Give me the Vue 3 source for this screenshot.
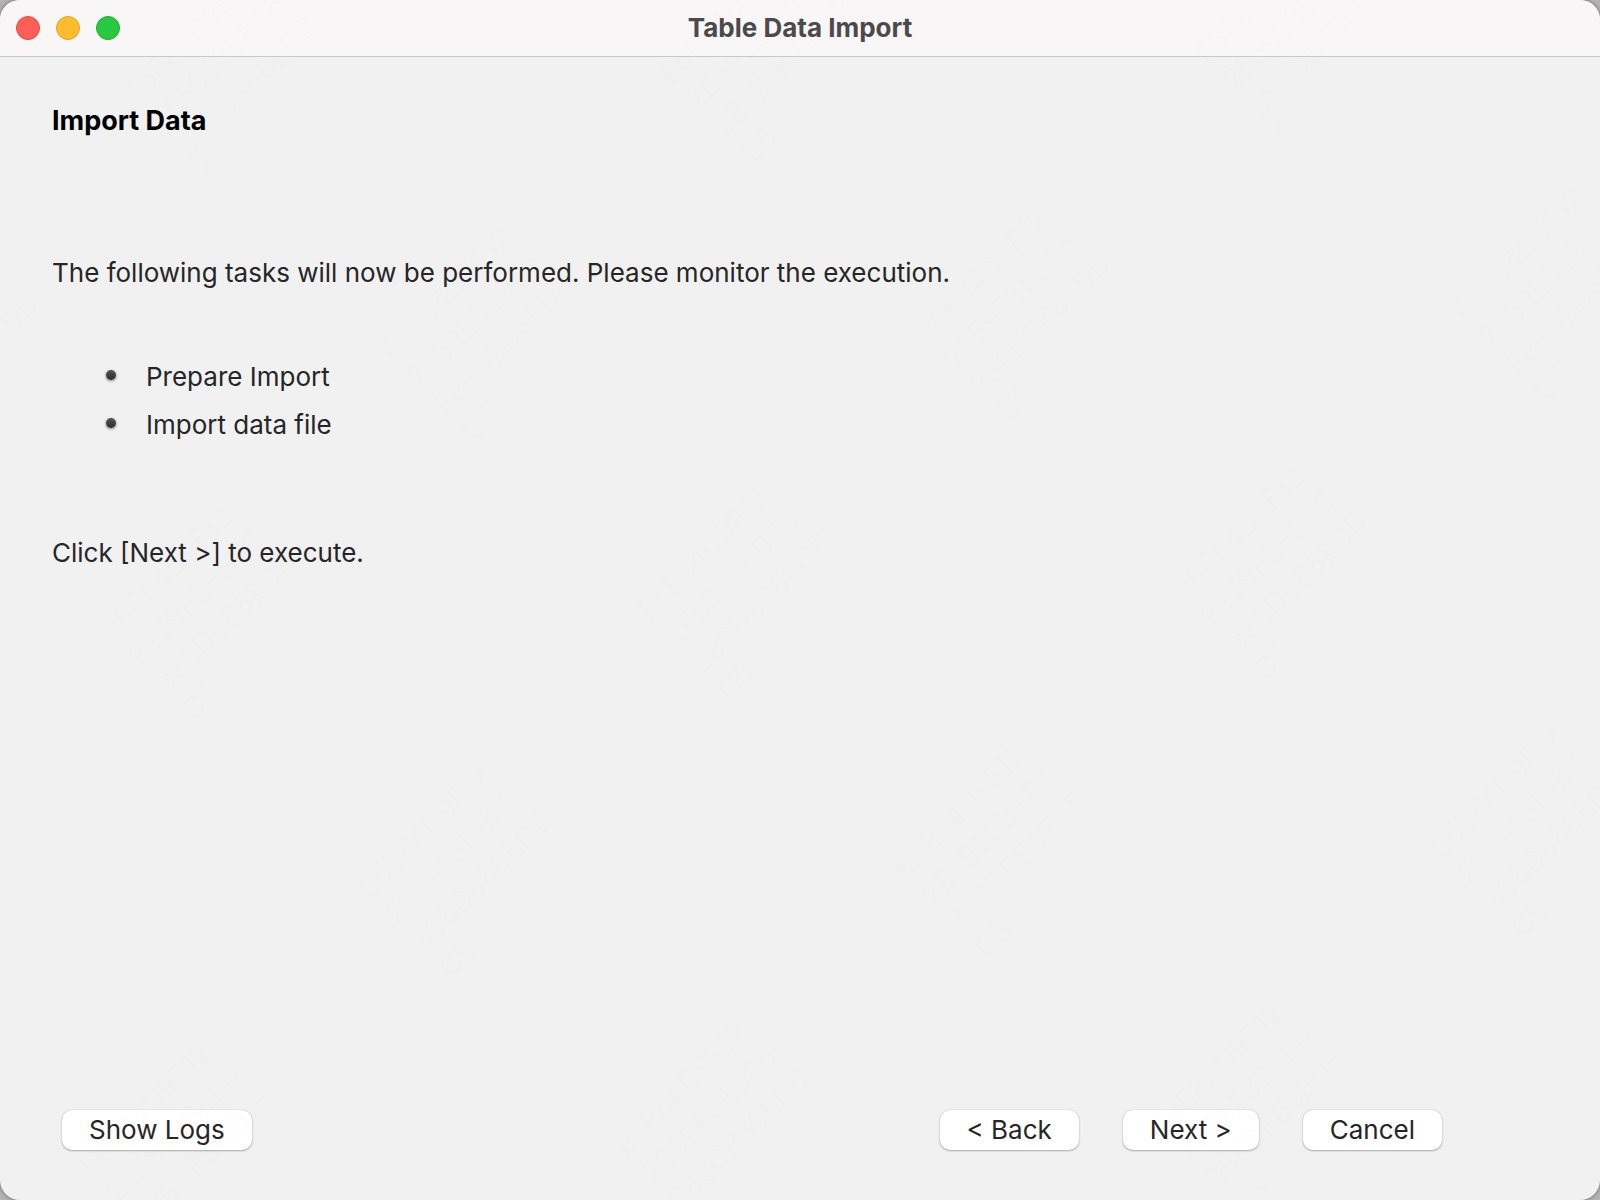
<script setup>
const tasks = ['Prepare Import', 'Import data file']
const stampLines = ['E6E84D9F12', '2E59E3BBF6', '386DB66EDB', 'C5']

// Two lattice vectors repeat the stamp diagonally over the window.
const stamps = []
for (let row = -3; row <= 3; row++) {
  for (let col = -3; col <= 3; col++) {
    const x = 649 + col * 536 + row * 257
    const y = 621 - col * 20 + row * 258
    if (x > -200 && x < 1600 && y > 0 && y < 1320) {
      stamps.push({ id: `${row}:${col}`, x, y })
    }
  }
}
</script>

<template>
  <div class="window">
    <header class="titlebar">
      <div class="lights">
        <button class="light close" type="button" aria-label="Close"></button>
        <button class="light minimize" type="button" aria-label="Minimize"></button>
        <button class="light zoom" type="button" aria-label="Zoom"></button>
      </div>
      <h1 class="title">Table Data Import</h1>
    </header>

    <main class="content">
      <h2 class="heading">Import Data</h2>
      <p class="intro">The following tasks will now be performed. Please monitor the execution.</p>
      <ul class="tasks">
        <li v-for="task in tasks" :key="task" class="task">
          <span class="dot"></span>
          <span>{{ task }}</span>
        </li>
      </ul>
      <p class="hint">Click [Next &gt;] to execute.</p>
    </main>

    <footer class="actions">
      <button class="push" type="button">Show Logs</button>
      <div class="steps">
        <button class="push" type="button">&lt; Back</button>
        <button class="push" type="button">Next &gt;</button>
        <button class="push" type="button">Cancel</button>
      </div>
    </footer>

    <svg class="watermark" aria-hidden="true">
      <g
        v-for="stamp in stamps"
        :key="stamp.id"
        :transform="`translate(${stamp.x} ${stamp.y}) rotate(-45)`"
      >
        <text v-for="(line, i) in stampLines" :key="line" x="0" :y="i * 38">{{ line }}</text>
      </g>
    </svg>
  </div>
</template>

<style>
body {
  margin: 0;
  background: #b4b4b4;
}
</style>

<style scoped>
.window {
  position: relative;
  display: flex;
  flex-direction: column;
  box-sizing: border-box;
  min-height: 100vh;
  overflow: hidden;
  border-radius: 20px;
  background: #f1f1f1;
  box-shadow: 0 0 4px #666;
  color: #262626;
  font: 400 26px/32px Inter, "Liberation Sans", sans-serif;
}

.titlebar {
  display: grid;
  grid-template-columns: 1fr auto 1fr;
  align-items: center;
  height: 56px;
  padding: 0 16px;
  border-bottom: 1px solid #c9c8c9;
  background: #f8f6f7;
}

.lights {
  display: flex;
  gap: 16px;
}

.light {
  width: 24px;
  height: 24px;
  padding: 0;
  border: 1px solid;
  border-radius: 50%;
}

.close {
  border-color: #e24b41;
  background: #ff5f57;
}

.minimize {
  border-color: #e1a325;
  background: #febc2e;
}

.zoom {
  border-color: #1fad2f;
  background: #28c840;
}

.title {
  margin: 0;
  color: #4b4a4b;
  font-size: 26px;
  font-weight: 700;
}

.content {
  flex: 1;
  padding: 48px 52px 0;
}

.heading {
  margin: 0;
  color: #000;
  font-size: 27px;
  font-weight: 700;
}

.intro {
  margin: 120px 0 0;
}

.tasks {
  display: flex;
  flex-direction: column;
  gap: 16px;
  margin: 72px 0 0;
  padding: 0 0 0 54px;
  list-style: none;
}

.task {
  display: flex;
  align-items: center;
  gap: 30px;
}

.dot {
  width: 10px;
  height: 10px;
  margin-bottom: 4px;
  border-radius: 50%;
  background: linear-gradient(#555, #2b2b2b);
  box-shadow: 0 1px 3px #777;
}

.hint {
  margin: 96px 0 0;
}

.actions {
  display: flex;
  justify-content: space-between;
  padding: 0 158px 50px 62px;
}

.steps {
  display: flex;
  gap: 44px;
}

.push {
  height: 40px;
  padding: 0 27px;
  border: 0;
  border-radius: 10px;
  background: #fff;
  box-shadow: 0 0 1px #aaa, 0 1px 2px #aaa;
  color: #262626;
  font: inherit;
}

.watermark {
  position: absolute;
  inset: 0;
  width: 100%;
  height: 100%;
  pointer-events: none;
  fill: #999;
  fill-opacity: 0.03;
  font-size: 29px;
  font-weight: 300;
}
</style>
